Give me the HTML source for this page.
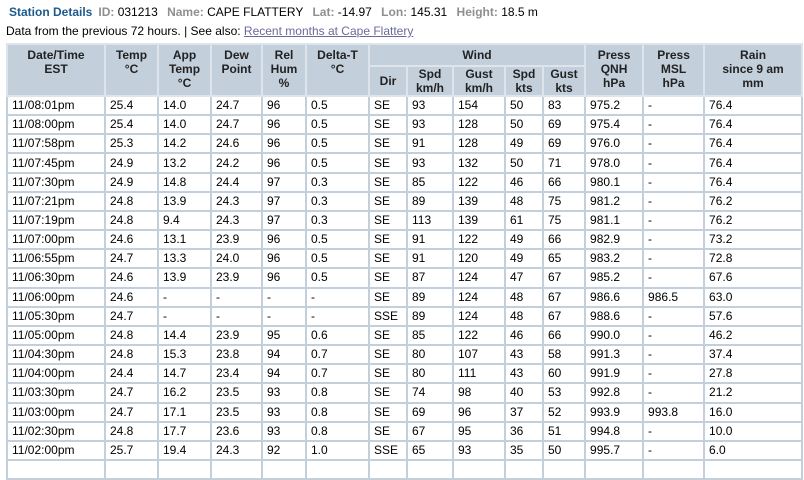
<!DOCTYPE html>
<html><head><meta charset="utf-8"><style>
body{margin:0;background:#fff;font-family:"Liberation Sans",Arial,sans-serif;font-size:12px;color:#000;width:804px;height:462px;overflow:hidden}
.top{position:absolute;left:9px;top:5px;font-size:12px;white-space:nowrap}
.top b.t{color:#1e5a8c}
.top .l{color:#8f8f8f;font-weight:bold;margin-left:6px}
.sub{position:absolute;left:6px;top:24px;white-space:nowrap}
.sub a{color:#6a6a9a;text-decoration:underline}
table{position:absolute;left:6px;top:43px;border-collapse:collapse;table-layout:fixed;width:795px}
td,th{border:2px solid #c3d0dc;padding:0 0 0 4px;text-align:left;height:17.17px;line-height:17px;white-space:nowrap;overflow:hidden}
th{background:#c3d0dc;text-align:center;font-weight:bold;color:#222;padding:0;line-height:14px;vertical-align:middle;border-color:#dde4eb}
th.top1{vertical-align:top;padding-top:3px}
tr.h1 th{height:20px}
tr.h2 th{height:27px}
</style></head><body>
<div class="top"><b class="t">Station Details</b><span class="l">ID:</span> 031213 <span class="l">Name:</span> CAPE FLATTERY <span class="l">Lat:</span> -14.97 <span class="l">Lon:</span> 145.31 <span class="l">Height:</span> 18.5 m</div>
<div class="sub">Data from the previous 72 hours. | See also: <a>Recent months at Cape Flattery</a></div>
<table>
<colgroup><col style="width:98px"><col style="width:53px"><col style="width:53px"><col style="width:51px"><col style="width:44px"><col style="width:63px"><col style="width:38px"><col style="width:46px"><col style="width:52px"><col style="width:38px"><col style="width:42px"><col style="width:58px"><col style="width:61px"><col style="width:98px"></colgroup>
<tr class="h1"><th rowspan="2" class="top1">Date/Time<br>EST</th><th rowspan="2" class="top1">Temp<br>°C</th><th rowspan="2" class="top1">App<br>Temp<br>°C</th><th rowspan="2" class="top1">Dew<br>Point</th><th rowspan="2" class="top1">Rel<br>Hum<br>%</th><th rowspan="2" class="top1">Delta-T<br>°C</th><th colspan="5">Wind</th><th rowspan="2" class="top1">Press<br>QNH<br>hPa</th><th rowspan="2" class="top1">Press<br>MSL<br>hPa</th><th rowspan="2" class="top1">Rain<br>since 9 am<br>mm</th></tr>
<tr class="h2"><th>Dir</th><th>Spd<br>km/h</th><th>Gust<br>km/h</th><th>Spd<br>kts</th><th>Gust<br>kts</th></tr>
<tr><td>11/08:01pm</td><td>25.4</td><td>14.0</td><td>24.7</td><td>96</td><td>0.5</td><td>SE</td><td>93</td><td>154</td><td>50</td><td>83</td><td>975.2</td><td>-</td><td>76.4</td></tr>
<tr><td>11/08:00pm</td><td>25.4</td><td>14.0</td><td>24.7</td><td>96</td><td>0.5</td><td>SE</td><td>93</td><td>128</td><td>50</td><td>69</td><td>975.4</td><td>-</td><td>76.4</td></tr>
<tr><td>11/07:58pm</td><td>25.3</td><td>14.2</td><td>24.6</td><td>96</td><td>0.5</td><td>SE</td><td>91</td><td>128</td><td>49</td><td>69</td><td>976.0</td><td>-</td><td>76.4</td></tr>
<tr><td>11/07:45pm</td><td>24.9</td><td>13.2</td><td>24.2</td><td>96</td><td>0.5</td><td>SE</td><td>93</td><td>132</td><td>50</td><td>71</td><td>978.0</td><td>-</td><td>76.4</td></tr>
<tr><td>11/07:30pm</td><td>24.9</td><td>14.8</td><td>24.4</td><td>97</td><td>0.3</td><td>SE</td><td>85</td><td>122</td><td>46</td><td>66</td><td>980.1</td><td>-</td><td>76.4</td></tr>
<tr><td>11/07:21pm</td><td>24.8</td><td>13.9</td><td>24.3</td><td>97</td><td>0.3</td><td>SE</td><td>89</td><td>139</td><td>48</td><td>75</td><td>981.2</td><td>-</td><td>76.2</td></tr>
<tr><td>11/07:19pm</td><td>24.8</td><td>9.4</td><td>24.3</td><td>97</td><td>0.3</td><td>SE</td><td>113</td><td>139</td><td>61</td><td>75</td><td>981.1</td><td>-</td><td>76.2</td></tr>
<tr><td>11/07:00pm</td><td>24.6</td><td>13.1</td><td>23.9</td><td>96</td><td>0.5</td><td>SE</td><td>91</td><td>122</td><td>49</td><td>66</td><td>982.9</td><td>-</td><td>73.2</td></tr>
<tr><td>11/06:55pm</td><td>24.7</td><td>13.3</td><td>24.0</td><td>96</td><td>0.5</td><td>SE</td><td>91</td><td>120</td><td>49</td><td>65</td><td>983.2</td><td>-</td><td>72.8</td></tr>
<tr><td>11/06:30pm</td><td>24.6</td><td>13.9</td><td>23.9</td><td>96</td><td>0.5</td><td>SE</td><td>87</td><td>124</td><td>47</td><td>67</td><td>985.2</td><td>-</td><td>67.6</td></tr>
<tr><td>11/06:00pm</td><td>24.6</td><td>-</td><td>-</td><td>-</td><td>-</td><td>SE</td><td>89</td><td>124</td><td>48</td><td>67</td><td>986.6</td><td>986.5</td><td>63.0</td></tr>
<tr><td>11/05:30pm</td><td>24.7</td><td>-</td><td>-</td><td>-</td><td>-</td><td>SSE</td><td>89</td><td>124</td><td>48</td><td>67</td><td>988.6</td><td>-</td><td>57.6</td></tr>
<tr><td>11/05:00pm</td><td>24.8</td><td>14.4</td><td>23.9</td><td>95</td><td>0.6</td><td>SE</td><td>85</td><td>122</td><td>46</td><td>66</td><td>990.0</td><td>-</td><td>46.2</td></tr>
<tr><td>11/04:30pm</td><td>24.8</td><td>15.3</td><td>23.8</td><td>94</td><td>0.7</td><td>SE</td><td>80</td><td>107</td><td>43</td><td>58</td><td>991.3</td><td>-</td><td>37.4</td></tr>
<tr><td>11/04:00pm</td><td>24.4</td><td>14.7</td><td>23.4</td><td>94</td><td>0.7</td><td>SE</td><td>80</td><td>111</td><td>43</td><td>60</td><td>991.9</td><td>-</td><td>27.8</td></tr>
<tr><td>11/03:30pm</td><td>24.7</td><td>16.2</td><td>23.5</td><td>93</td><td>0.8</td><td>SE</td><td>74</td><td>98</td><td>40</td><td>53</td><td>992.8</td><td>-</td><td>21.2</td></tr>
<tr><td>11/03:00pm</td><td>24.7</td><td>17.1</td><td>23.5</td><td>93</td><td>0.8</td><td>SE</td><td>69</td><td>96</td><td>37</td><td>52</td><td>993.9</td><td>993.8</td><td>16.0</td></tr>
<tr><td>11/02:30pm</td><td>24.8</td><td>17.7</td><td>23.6</td><td>93</td><td>0.8</td><td>SE</td><td>67</td><td>95</td><td>36</td><td>51</td><td>994.8</td><td>-</td><td>10.0</td></tr>
<tr><td>11/02:00pm</td><td>25.7</td><td>19.4</td><td>24.3</td><td>92</td><td>1.0</td><td>SSE</td><td>65</td><td>93</td><td>35</td><td>50</td><td>995.7</td><td>-</td><td>6.0</td></tr>
<tr><td>&nbsp;</td><td></td><td></td><td></td><td></td><td></td><td></td><td></td><td></td><td></td><td></td><td></td><td></td><td></td></tr>
</table>
</body></html>
